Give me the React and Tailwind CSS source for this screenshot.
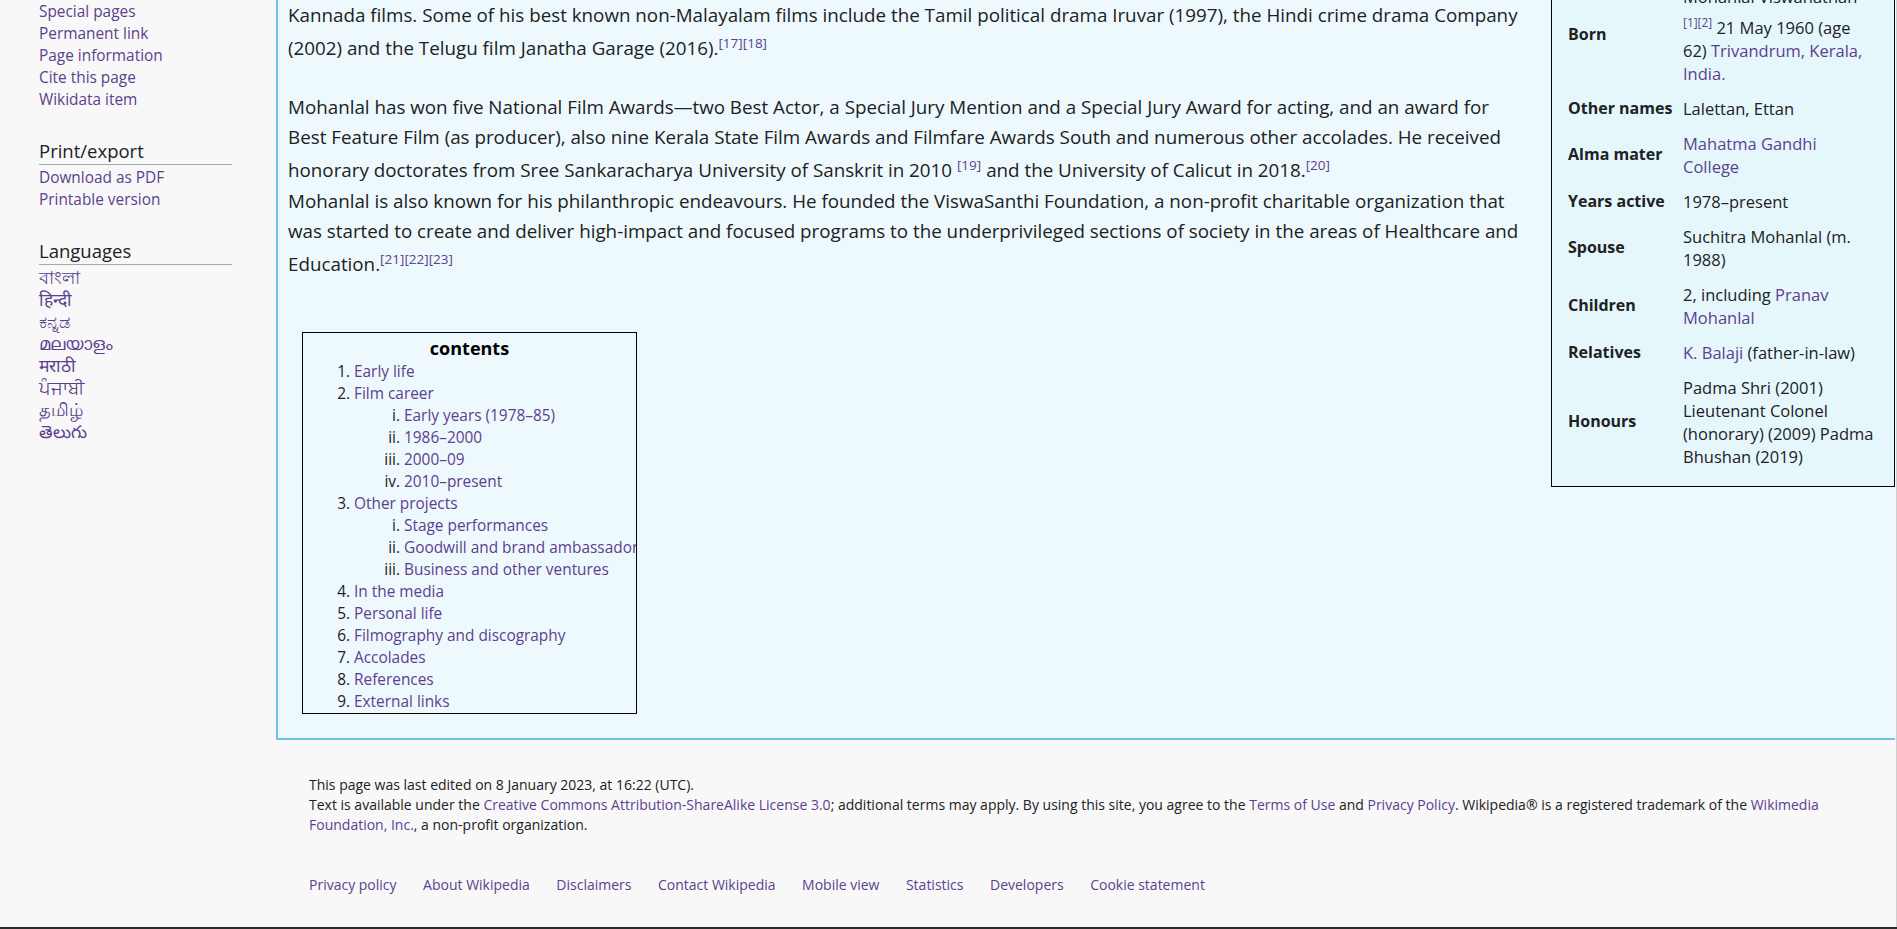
const link = 'text-[#5c3f8f]'

const tools = ['Special pages', 'Permanent link', 'Page information', 'Cite this page', 'Wikidata item']
const printExport = ['Download as PDF', 'Printable version']
const languages = ['বাংলা', 'हिन्दी', 'ಕನ್ನಡ', 'മലയാളം', 'मराठी', 'ਪੰਜਾਬੀ', 'தமிழ்', 'తెలుగు']

const contents = [
  { title: 'Early life' },
  { title: 'Film career', sub: ['Early years (1978–85)', '1986–2000', '2000–09', '2010–present'] },
  { title: 'Other projects', sub: ['Stage performances', 'Goodwill and brand ambassador', 'Business and other ventures'] },
  { title: 'In the media' },
  { title: 'Personal life' },
  { title: 'Filmography and discography' },
  { title: 'Accolades' },
  { title: 'References' },
  { title: 'External links' },
]

const footerLinks = ['Privacy policy', 'About Wikipedia', 'Disclaimers', 'Contact Wikipedia', 'Mobile view', 'Statistics', 'Developers', 'Cookie statement']

// the reference's superscripts push their line down a few px, leading on the sup does the same
function Sup({ children, lh = 'leading-[2]' }) {
  return <sup className={`static align-super text-[0.72em] ${lh} ${link}`}>{children}</sup>
}

function Sidebar() {
  return (
    <aside className="w-[276px] shrink-0 pl-[39px] pr-[44px] text-[15.4px] leading-[22px]">
      <ul className="pt-px">
        {tools.map((t) => (
          <li key={t}><a className={link}>{t}</a></li>
        ))}
      </ul>

      <h3 className="mt-[27px] border-b border-[#a2a9b1] text-[18.5px] leading-[26px] text-[#202122]">Print/export</h3>
      <ul className="mt-[2px]">
        {printExport.map((t) => (
          <li key={t}><a className={link}>{t}</a></li>
        ))}
      </ul>

      <h3 className="mt-[27px] border-b border-[#a2a9b1] text-[18.5px] leading-[26px] text-[#202122]">Languages</h3>
      <ul className="mt-px text-[17.5px]">
        {languages.map((t) => (
          <li key={t}><a className={link}>{t}</a></li>
        ))}
      </ul>
    </aside>
  )
}

function Infobox() {
  const th = 'w-[115px] py-[6px] pr-[8px] text-left align-middle text-[16px] font-bold'
  const td = 'py-[6px] align-middle'
  return (
    <div className="-mt-[23px] w-[344px] shrink-0 self-start border border-black bg-[#e6f7fc] pl-[16px] pr-[12px] pt-px pb-[12px] text-[16.5px] leading-[23px]">
      <table className="w-full border-collapse">
        <tbody>
          <tr>
            <th className={th}>Born</th>
            <td className={td}>
              Mohanlal Viswanathan
              <br />
              <Sup lh="leading-[2.4]">[1]</Sup>
              <Sup lh="leading-[2.4]">[2]</Sup> 21 May 1960 (age
              <br />
              62) <a className={link}>Trivandrum, Kerala,</a>
              <br />
              <a className={link}>India.</a>
            </td>
          </tr>
          <tr>
            <th className={th}>Other names</th>
            <td className={td}>Lalettan, Ettan</td>
          </tr>
          <tr>
            <th className={th}>Alma mater</th>
            <td className={td}>
              <a className={link}>Mahatma Gandhi<br />College</a>
            </td>
          </tr>
          <tr>
            <th className={th}>Years active</th>
            <td className={td}>1978–present</td>
          </tr>
          <tr>
            <th className={th}>Spouse</th>
            <td className={td}>Suchitra Mohanlal (m.<br />1988)</td>
          </tr>
          <tr>
            <th className={th}>Children</th>
            <td className={td}>
              2, including <a className={link}>Pranav<br />Mohanlal</a>
            </td>
          </tr>
          <tr>
            <th className={th}>Relatives</th>
            <td className={td}><a className={link}>K. Balaji</a> (father-in-law)</td>
          </tr>
          <tr>
            <th className={th}>Honours</th>
            <td className={td}>
              Padma Shri (2001)
              <br />
              Lieutenant Colonel
              <br />
              (honorary) (2009) Padma
              <br />
              Bhushan (2019)
            </td>
          </tr>
        </tbody>
      </table>
    </div>
  )
}

function Contents() {
  return (
    <div className="ml-[14px] mt-[53px] w-[335px] overflow-hidden border border-black text-[15.4px] leading-[22px]">
      <h2 className="pt-[2px] text-center text-[18px] font-bold leading-[26px] text-black">contents</h2>
      <ol className="list-decimal pl-[51px]">
        {contents.map((c) => (
          <li key={c.title} className="whitespace-nowrap">
            <a className={link}>{c.title}</a>
            {c.sub && (
              <ol className="list-[lower-roman] pl-[50px]">
                {c.sub.map((s) => (
                  <li key={s}><a className={link}>{s}</a></li>
                ))}
              </ol>
            )}
          </li>
        ))}
      </ol>
    </div>
  )
}

export default function App() {
  return (
    <div className="flex h-[929px] w-full flex-col overflow-hidden bg-[#f8f8f8] font-['Open_Sans',sans-serif] text-[#202122]">
      <div className="flex min-h-0 flex-1 border-r border-[#cfcfcf]">
        <Sidebar />

        <div className="flex min-w-0 flex-1 flex-col pr-px">
          <main className="flex h-[740px] border-b-2 border-l-2 border-[#6dc1ea] bg-[#eef9fd] pl-[10px]">
            <div className="min-w-0 flex-1 pr-[12px] text-[18.8px] leading-[30px]">
              <p>
                Kannada films. Some of his best known non-Malayalam films include the Tamil political drama Iruvar (1997), the Hindi crime drama Company
                <br />
                (2002) and the Telugu film Janatha Garage (2016).<Sup>[17][18]</Sup>
              </p>
              <p className="mt-[29px]">
                Mohanlal has won five National Film Awards—two Best Actor, a Special Jury Mention and a Special Jury Award for acting, and an award for
                <br />
                Best Feature Film (as producer), also nine Kerala State Film Awards and Filmfare Awards South and numerous other accolades. He received
                <br />
                honorary doctorates from Sree Sankaracharya University of Sanskrit in 2010 <Sup>[19]</Sup> and the University of Calicut in 2018.<Sup>[20]</Sup>
                <br />
                Mohanlal is also known for his philanthropic endeavours. He founded the ViswaSanthi Foundation, a non-profit charitable organization that
                <br />
                was started to create and deliver high-impact and focused programs to the underprivileged sections of society in the areas of Healthcare and
                <br />
                Education.<Sup>[21][22][23]</Sup>
              </p>
              <Contents />
            </div>
            <Infobox />
          </main>

          <footer className="pl-[33px] pr-[30px] pt-[35px] text-[14px] leading-[20px]">
            <p>This page was last edited on 8 January 2023, at 16:22 (UTC).</p>
            <p>
              Text is available under the <a className={link}>Creative Commons Attribution-ShareAlike License 3.0</a>;
              additional terms may apply. By using this site, you agree to the <a className={link}>Terms of Use</a> and{' '}
              <a className={link}>Privacy Policy</a>. Wikipedia® is a registered trademark of the{' '}
              <a className={link}>Wikimedia Foundation, Inc.</a>, a non-profit organization.
            </p>
            <ul className="mt-[40px] flex gap-x-[26.5px]">
              {footerLinks.map((t) => (
                <li key={t}><a className={link}>{t}</a></li>
              ))}
            </ul>
          </footer>
        </div>
      </div>
      <div className="h-[2px] shrink-0 bg-[#2b2b2b]" />
    </div>
  )
}
